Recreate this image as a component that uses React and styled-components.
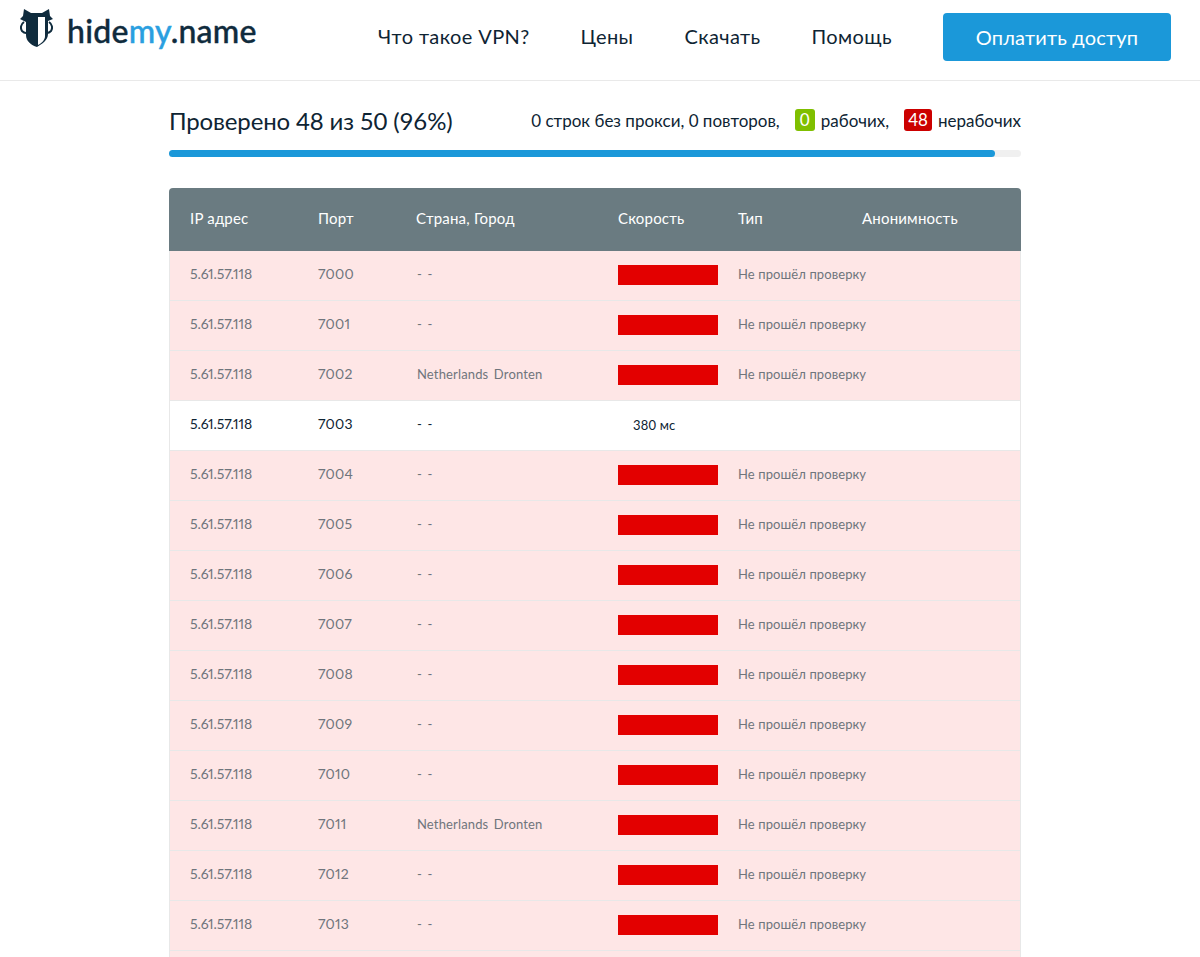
import React from 'react';
import styled, { createGlobalStyle } from 'styled-components';

const GlobalStyle = createGlobalStyle`
  html, body { margin: 0; padding: 0; height: 957px; overflow: hidden; background: #fff; }
  body { font-family: Lato, "Open Sans", sans-serif; color: #0e2433; }
  * { box-sizing: border-box; }
`;

const Header = styled.header`
  height: 81px;
  border-bottom: 1px solid #e9e9e9;
  display: flex;
  align-items: flex-start;
  padding: 9px 29px 0 20px;
`;

const LogoLink = styled.a`
  display: flex;
  align-items: flex-start;
  gap: 14px;
  text-decoration: none;
  color: #0f2b3d;
`;

const LogoText = styled.span`
  font-size: 32px;
  font-weight: 500;
  line-height: 38px;
  margin-top: 3px;
  letter-spacing: 0.25px;
  -webkit-text-stroke: 0.4px currentColor;
`;

const LogoAccent = styled.span`
  color: #2a9fe0;
`;

const Nav = styled.nav`
  margin: 4px 51px 0 auto;
  display: flex;
  align-items: center;
  gap: 51px;
  height: 46px;
`;

const NavLink = styled.a`
  font-size: 20px;
  letter-spacing: 0.4px;
  color: #0e2433;
  text-decoration: none;
`;

const PayButton = styled.button`
  width: 228px;
  height: 48px;
  margin-top: 4px;
  border: 0;
  border-radius: 4px;
  background: #1b98d9;
  color: #fff;
  font: 20px Lato, sans-serif;
  letter-spacing: 0.2px;
`;

const Main = styled.main`
  width: 852px;
  margin-left: 169px;
`;

const Summary = styled.div`
  display: flex;
  align-items: center;
  justify-content: space-between;
  height: 40px;
  margin-top: 19px;
`;

const Title = styled.h1`
  margin: 0;
  font-size: 24px;
  font-weight: 400;
  letter-spacing: -0.15px;
`;

const Stats = styled.div`
  display: flex;
  align-items: center;
  font-size: 17px;
`;

const Badge = styled.span`
  display: inline-block;
  min-width: 20px;
  height: 22px;
  line-height: 22px;
  padding: 0 4px;
  margin: 0 6px 0 15px;
  border-radius: 3px;
  text-align: center;
  color: #fff;
  background: ${p => p.$bg};
`;

const Track = styled.div`
  height: 7px;
  margin-top: 10px;
  border-radius: 4px;
  background: #f0f0f0;
`;

const Fill = styled.div`
  height: 100%;
  border-radius: 4px;
  background: #1b98d9;
`;

const Table = styled.div`
  margin-top: 31px;
`;

const columns = '128px 98px 202px 120px 124px 1fr';

const HeadRow = styled.div`
  display: grid;
  grid-template-columns: ${columns};
  align-items: center;
  height: 63px;
  padding: 0 0 3px 21px;
  border-radius: 4px 4px 0 0;
  background: #6a7b81;
  color: #fff;
  font-size: 15px;
  letter-spacing: 0.2px;
`;

const Row = styled.div`
  display: grid;
  grid-template-columns: ${columns};
  align-items: center;
  height: 50px;
  padding: 0 0 1px 20px;
  border: solid #e8e8e8;
  border-width: 0 1px 1px 1px;
  background: ${p => (p.$ok ? '#fff' : '#fee6e6')};
  color: ${p => (p.$ok ? '#0e2433' : '#6f757c')};
  font-size: 14px;
`;

const IpCell = styled.span`
  font-variant-numeric: proportional-nums;
  letter-spacing: -0.1px;
  margin-top: -4px;
`;

const PortCell = styled.span`
  font-variant-numeric: proportional-nums;
  letter-spacing: 0.2px;
  margin-top: -4px;
`;

const CityCell = styled.span`
  padding-left: 1px;
  margin-top: -2px;
  font-size: 13px;
  word-spacing: ${p => (p.$named ? 2 : 2)}px;
  letter-spacing: 0.15px;
`;

const DeadBar = styled.span`
  display: block;
  width: 100px;
  height: 20px;
  background: #e30000;
`;

const SpeedText = styled.span`
  padding-left: 15px;
  font-size: 13px;
  letter-spacing: 0.2px;
`;

const FailText = styled.span`
  grid-column: span 2;
  font-size: 13px;
  letter-spacing: 0.1px;
  margin-top: -3px;
`;

const Logo = () => (
  <svg width="33" height="40" viewBox="0 0 33 40" aria-hidden="true">
    <path
      fill="#0f2b3d"
      d="M4 0l7 4h11l7-4 1 7 3 3-5 2v13c0 6-6 10-11 13C11 36 6 32 6 26V13L0 10l3-3z"
    />
    <path fill="none" stroke="#0f2b3d" strokeWidth="2" d="M4 13C1 15 0 19 2 22c1 1 2 2 4 2" />
    <path fill="none" stroke="#0f2b3d" strokeWidth="2" d="M29 13c3 2 4 6 2 9-1 1-2 2-4 2" />
    <path fill="#fff" d="M18 8h7v19c0 4-3 7-7 9z" />
  </svg>
);

const ports = Array.from({ length: 14 }, (_, i) => 7000 + i);
const cities = { 7002: 'Netherlands Dronten', 7011: 'Netherlands Dronten' };

export default function App() {
  return (
    <>
      <GlobalStyle />
      <Header>
        <LogoLink href="#">
          <Logo />
          <LogoText>hide<LogoAccent>my</LogoAccent>.name</LogoText>
        </LogoLink>
        <Nav>
          <NavLink href="#">Что такое VPN?</NavLink>
          <NavLink href="#">Цены</NavLink>
          <NavLink href="#">Скачать</NavLink>
          <NavLink href="#">Помощь</NavLink>
        </Nav>
        <PayButton>Оплатить доступ</PayButton>
      </Header>
      <Main>
        <Summary>
          <Title>Проверено 48 из 50 (96%)</Title>
          <Stats>
            0 строк без прокси, 0 повторов,
            <Badge $bg="#7fbf00">0</Badge>рабочих,
            <Badge $bg="#cc0000">48</Badge>нерабочих
          </Stats>
        </Summary>
        <Track><Fill style={{ width: `${(826 / 852) * 100}%` }} /></Track>
        <Table>
          <HeadRow>
            <span>IP адрес</span>
            <span>Порт</span>
            <span>Страна, Город</span>
            <span>Скорость</span>
            <span>Тип</span>
            <span>Анонимность</span>
          </HeadRow>
          {ports.map(port => {
            const ok = port === 7003;
            return (
              <Row key={port} $ok={ok}>
                <IpCell>5.61.57.118</IpCell>
                <PortCell>{port}</PortCell>
                <CityCell $named={!!cities[port]}>{cities[port] || '- -'}</CityCell>
                {ok ? <SpeedText>380 мс</SpeedText> : <DeadBar />}
                {!ok && <FailText>Не прошёл проверку</FailText>}
              </Row>
            );
          })}
          <Row />
        </Table>
      </Main>
    </>
  );
}
